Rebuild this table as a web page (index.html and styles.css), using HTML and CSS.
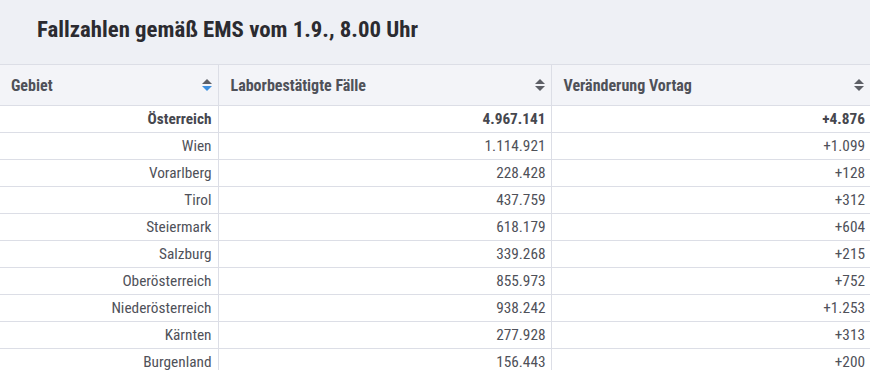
FILE: index.html
```html
<!DOCTYPE html>
<html lang="de">
<head>
<meta charset="utf-8">
<link rel="stylesheet" href="styles.css">
</head>
<body>
<div class="widget">
  <h1 class="title">Fallzahlen gemäß EMS vom 1.9., 8.00 Uhr</h1>
  <table class="data">
    <colgroup><col class="c1"><col class="c2"><col class="c3"></colgroup>
    <thead>
      <tr>
        <th><div class="th-in"><span>Gebiet</span><span class="sort active"><i class="up"></i><i class="down"></i></span></div></th>
        <th><div class="th-in"><span>Laborbestätigte Fälle</span><span class="sort"><i class="up"></i><i class="down"></i></span></div></th>
        <th><div class="th-in"><span>Veränderung Vortag</span><span class="sort"><i class="up"></i><i class="down"></i></span></div></th>
      </tr>
    </thead>
    <tbody>
      <tr class="total"><td>Österreich</td><td>4.967.141</td><td>+4.876</td></tr>
      <tr><td>Wien</td><td>1.114.921</td><td>+1.099</td></tr>
      <tr><td>Vorarlberg</td><td>228.428</td><td>+128</td></tr>
      <tr><td>Tirol</td><td>437.759</td><td>+312</td></tr>
      <tr><td>Steiermark</td><td>618.179</td><td>+604</td></tr>
      <tr><td>Salzburg</td><td>339.268</td><td>+215</td></tr>
      <tr><td>Oberösterreich</td><td>855.973</td><td>+752</td></tr>
      <tr><td>Niederösterreich</td><td>938.242</td><td>+1.253</td></tr>
      <tr><td>Kärnten</td><td>277.928</td><td>+313</td></tr>
      <tr><td>Burgenland</td><td>156.443</td><td>+200</td></tr>
    </tbody>
  </table>
</div>
</body>
</html>
```
FILE: styles.css
```css
html, body { margin: 0; padding: 0; background: #fff; }
body { font-family: "Roboto Condensed", "DejaVu Sans Condensed", sans-serif; color: #4b4d55; }
.widget { width: 870px; }
.title {
  margin: 0;
  height: 64px;
  box-sizing: border-box;
  padding: 15px 0 0 37px;
  background: #eef0f5;
  font-size: 22.8px;
  line-height: 30px;
  font-weight: bold;
  color: #2b2b30;
}
.data { width: 870px; border-collapse: collapse; table-layout: fixed; }
.c1 { width: 218px; }
.c2 { width: 333px; }
.c3 { width: 319px; }
.data th {
  background: #f3f4f8;
  border-top: 1px solid #dcdee6;
  border-bottom: 1px solid #dcdee6;
  border-left: 1px solid #dcdee6;
  height: 41px;
  padding: 0 6px 0 12px;
  text-align: left;
  font-size: 16px;
  font-weight: bold;
  color: #4f5159;
  box-sizing: border-box;
}
.data th:first-child { border-left: none; padding-left: 11px; }
.th-in { display: flex; align-items: center; justify-content: space-between; }
.sort { display: flex; flex-direction: column; gap: 2px; width: 10px; align-items: center; }
.sort i { display: block; width: 0; height: 0; border-left: 5px solid transparent; border-right: 5px solid transparent; }
.sort .up { border-bottom: 5px solid #5d5f66; }
.sort .down { border-top: 5px solid #5d5f66; }
.sort.active .down { border-top-color: #3d8fe0; }
.data td {
  height: 27px;
  box-sizing: border-box;
  padding: 0 6px 0 6px;
  text-align: right;
  font-size: 15.3px;
  color: #4f5159;
  border-bottom: 1px solid #dcdee6;
  border-left: 1px solid #dcdee6;
  white-space: nowrap;
}
.data td:first-child { border-left: none; }
.data td:nth-child(2) { padding-right: 5px; }
.data td:nth-child(3) { padding-right: 5px; }
.total td { font-weight: bold; color: #46474e; }
```
